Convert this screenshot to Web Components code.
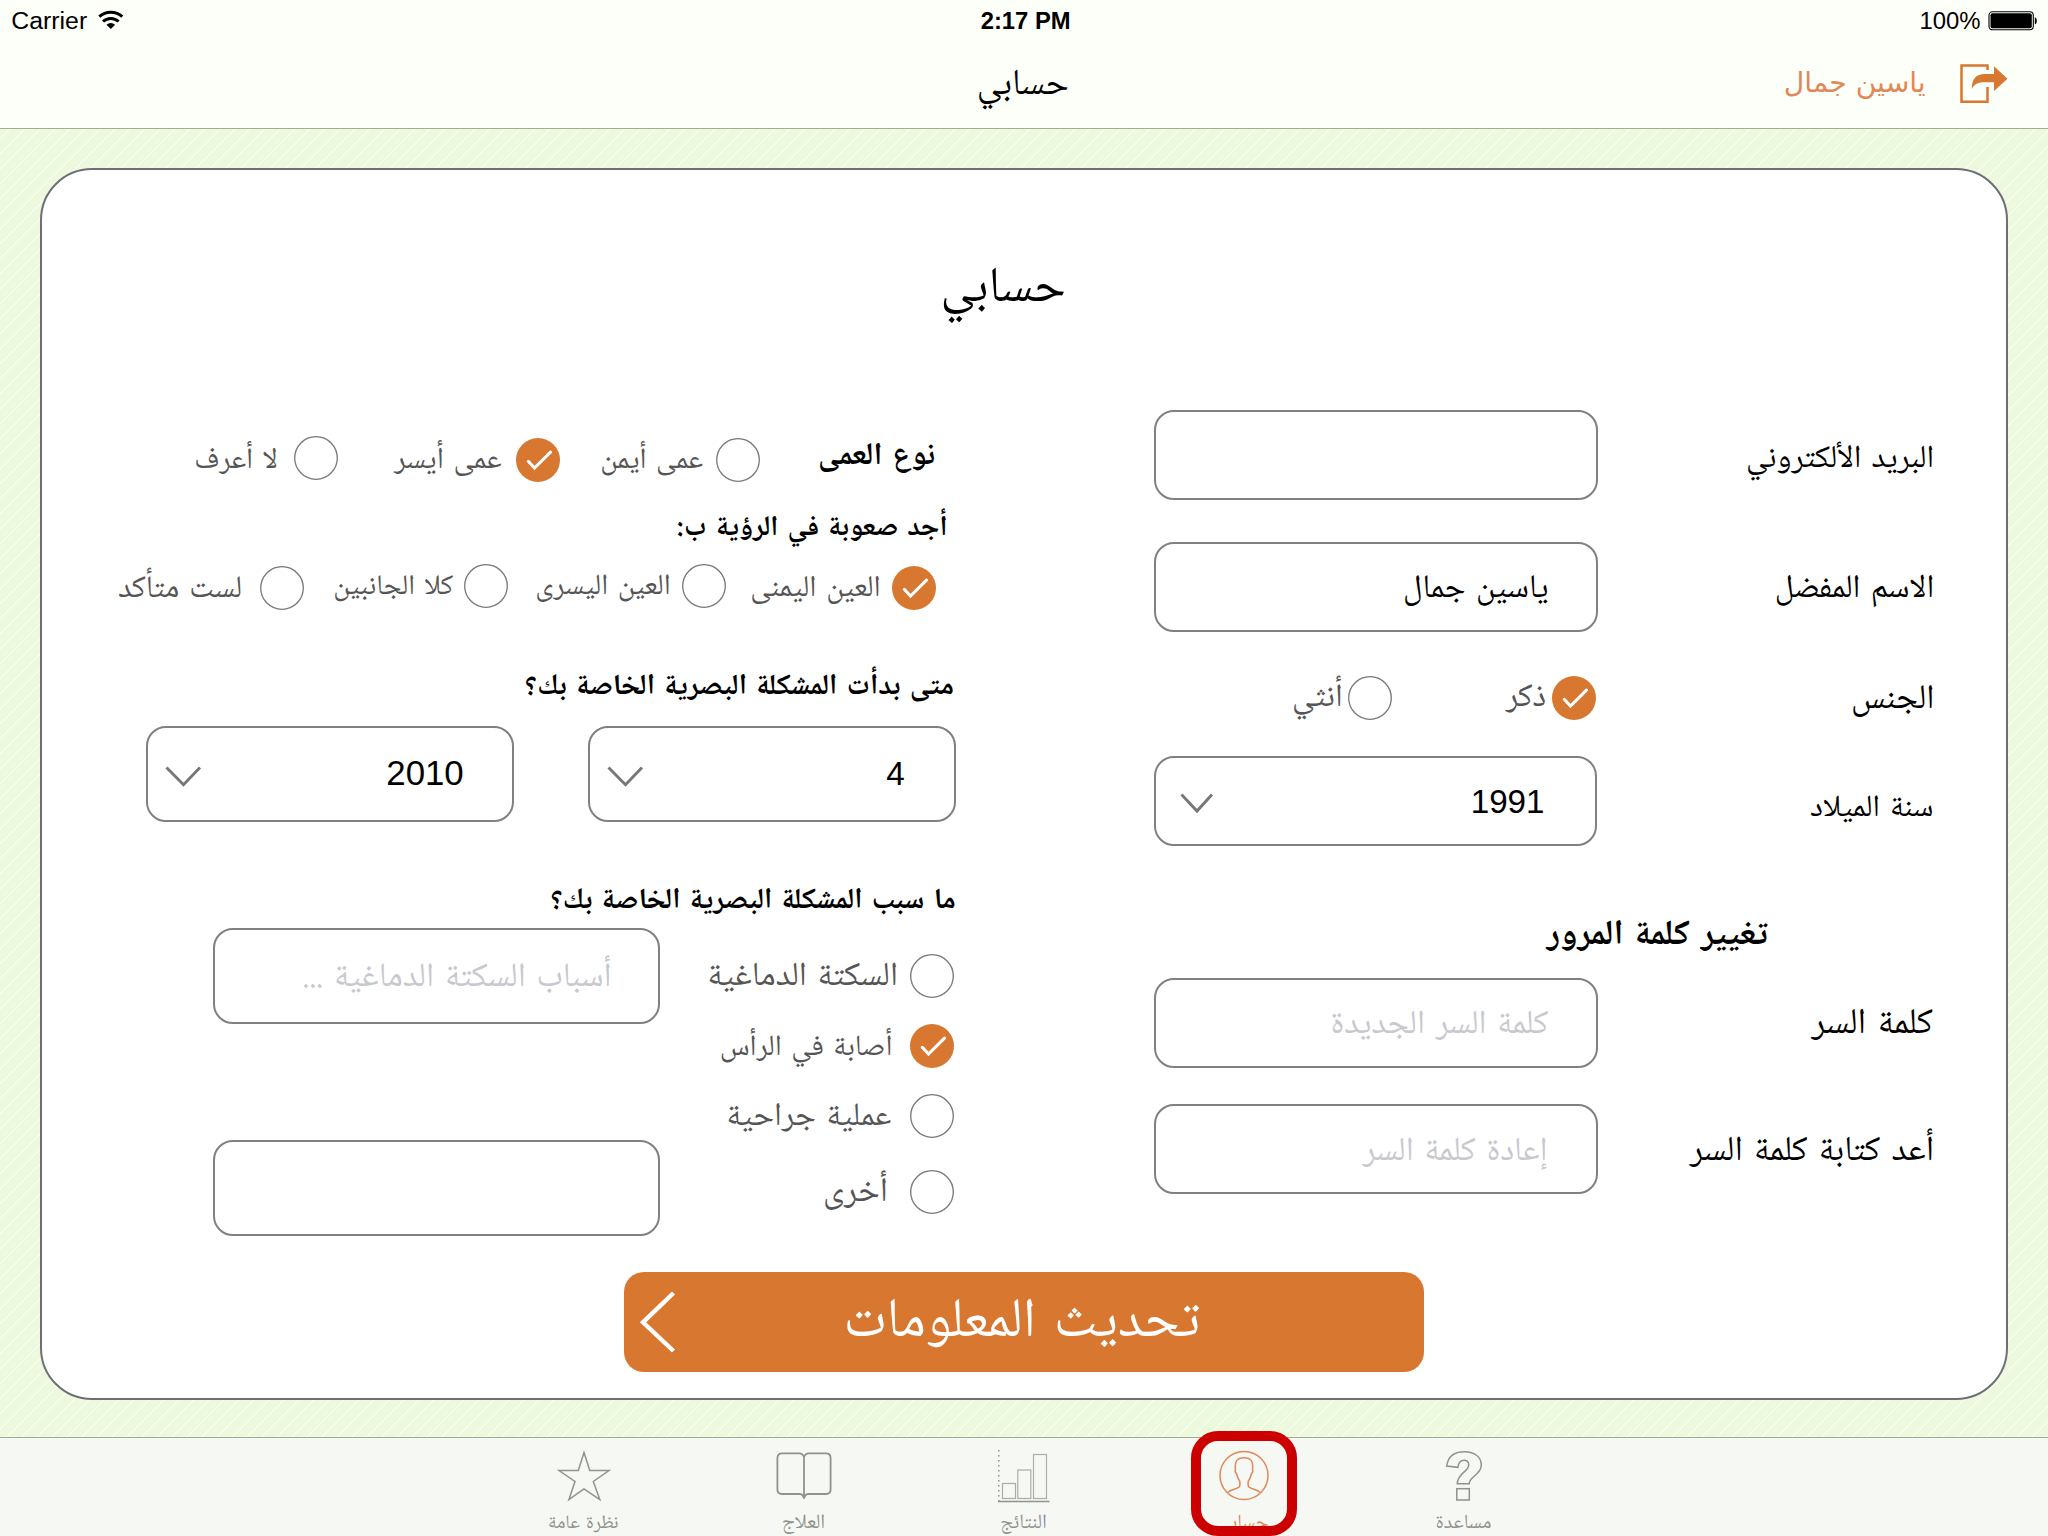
<!DOCTYPE html>
<html lang="ar">
<head>
<meta charset="utf-8">
<title>حسابي</title>
<style>
html,body{margin:0;width:2048px;height:1536px;overflow:hidden}
body{font-family:"Noto Naskh Arabic","DejaVu Sans",sans-serif;color:#000}
</style>
</head>
<body>
<account-app></account-app>
<script>
const FACES={
  naskh:'"Noto Naskh Arabic","DejaVu Sans",sans-serif',
  sans:'"DejaVu Sans",sans-serif',
  latin:'"Liberation Sans",Arial,sans-serif'
};
const ctx=document.createElement('canvas').getContext('2d');

/* A single line of text whose ink spans exactly `w` pixels, baseline 34px below its top. */
class FitText extends HTMLElement{
  connectedCallback(){
    const w=+this.getAttribute('w'),name=this.getAttribute('face')||'naskh',face=FACES[name];
    const dir=name=='latin'?'ltr':'rtl',gap=name=='naskh'?.1:0;
    const bold=this.hasAttribute('bold')?700:400;
    const r=this.attachShadow({mode:'open'});
    r.innerHTML=`<style>:host{display:block;flex:none;direction:ltr;width:${w}px;height:${this.getAttribute('h')||48}px;font-family:${face};font-weight:${bold}}
      span{display:block;width:max-content;white-space:pre;line-height:1.2;word-spacing:${gap}em;direction:${dir};transform-origin:0 0}
      i{display:inline-block;width:0;height:0}</style><span><slot></slot><i></i></span>`;
    ctx.font=`${bold} 100px ${face}`;ctx.direction=dir;ctx.textAlign='left';ctx.wordSpacing=gap*100+'px';
    const m=ctx.measureText(this.textContent);
    const size=100*w/(m.actualBoundingBoxRight+m.actualBoundingBoxLeft);
    const s=r.querySelector('span');
    s.style.fontSize=size+'px';
    const base=r.querySelector('i').getBoundingClientRect().bottom-this.getBoundingClientRect().top;
    s.style.transform=`translate(${m.actualBoundingBoxLeft*size/100}px,${34-base}px)`;
  }
}

class RadioDot extends HTMLElement{
  connectedCallback(){
    const on=this.hasAttribute('checked');
    this.attachShadow({mode:'open'}).innerHTML=`<style>:host{display:block;flex:none;width:44px;height:44px}svg{display:block}</style>
    <svg width="44" height="44">${on
      ?'<circle cx="22" cy="22" r="22" fill="#d87730"/><path d="M12.3 23.3 18.5 30 34.5 14.2" fill="none" stroke="#fff" stroke-width="3.1" stroke-linecap="round"/>'
      :'<circle cx="22" cy="22" r="21.3" fill="#fff" stroke="#777" stroke-width="1.3"/>'}</svg>`;
  }
}

class FieldBox extends HTMLElement{
  connectedCallback(){
    const w=this.getAttribute('w'),h=this.getAttribute('h'),c=this.getAttribute('chevron');
    this.attachShadow({mode:'open'}).innerHTML=`<style>:host{display:flex;flex:none;box-sizing:border-box;width:${w}px;height:${h}px;
      border:2px solid #808080;border-radius:20px;align-items:flex-start;justify-content:space-between}
      svg{display:block;margin:${h==90?35:38}px 0 0 ${c}px}</style>
      ${c?`<svg width="37" height="22"><path d="${h==90?'M1.5 1.5 17 18 32 1.5':'M1.5 1.5 18.5 18.7 35 1.5'}" fill="none" stroke="#777" stroke-width="2.9"/></svg>`:'<b></b>'}<slot></slot>`;
  }
}

const ICONS={
  star:'<path d="M30 4.5 35.8 22.5H55L39.3 33.5 45.8 51.5 30 41 14.9 51.5 21 33.5 5 22.5H24.3Z"/>',
  book:'<g stroke-width="1.8"><path d="M30 9C29 6 27.500 5.300 25 5.300H8Q3.400 5.300 3.400 10V41.500Q3.400 46 8 46H26Q29 46.300 30 50.500Q31 46.300 34 46H52Q56.600 46 56.600 41.500V10Q56.600 5.300 52 5.300H35C32.500 5.300 31 6 30 9V50"/></g>',
  chart:'<g transform="translate(-1 0)"><path d="M5.800 2V53" stroke-dasharray="1.400 3.600"/><path d="M5 53.500H56.500"/><g stroke="#aaada9" stroke-width="1.200"><rect x="9.500" y="35.500" width="13" height="15"/><rect x="24.800" y="22" width="13" height="28.500"/><rect x="40.500" y="6.500" width="13" height="44"/></g></g>',
  person:'<circle cx="30" cy="27.500" r="24"/><path d="M14 44.200C17 41.500 23.500 41 25.500 38.700C26.500 37 26 34.500 25.700 33C23.500 30.500 23 27.500 22.500 25.500C21 24.500 20.800 22.500 21.500 21.500C20.500 14 22.500 9.800 30 9.800S39.500 14 38.500 21.500C39.200 22.500 39 24.500 37.500 25.500C37 27.500 36.500 30.500 34.300 33C34 34.500 33.500 37 34.500 38.700C36.500 41 43 41.500 46 44.200"/>',
  help:'<path d="M12.700 18C14 8 21 3.700 30.500 3.700C41 3.700 47.300 9.300 47.300 17C47.300 27 35.400 28 35.200 35.800H23.300C23.300 25 34.700 24 34.700 17C34.700 14 33 12.200 30 12.200C26.500 12.200 24.500 14.500 24 19.300Z"/><rect x="22.800" y="40.700" width="12.500" height="11.300"/>'
};
class TabItem extends HTMLElement{
  connectedCallback(){
    const on=this.hasAttribute('active');
    this.attachShadow({mode:'open'}).innerHTML=`<style>:host{display:flex;flex-direction:column;align-items:center;box-sizing:border-box;width:220px;height:98px;padding-top:10px;
      position:relative;color:${on?'#e08858':'#8f928e'}}
      svg{display:block;flex:none}.label{margin-top:-10px}
      .mark{position:absolute;left:57.500px;top:-7.500px;width:106px;height:105.500px;box-sizing:border-box;border:10px solid #c00;border-radius:27px}</style>
      <svg width="60" height="56" fill="none" stroke="currentColor" stroke-width="1.5">${ICONS[this.getAttribute('icon')]}</svg>
      <div class="label"><slot></slot></div>${on?'<div class="mark"></div>':''}`;
  }
}

class AppHeader extends HTMLElement{
  connectedCallback(){
    this.attachShadow({mode:'open'}).innerHTML=`<style>:host{display:block;box-sizing:border-box;height:129px;background:#fdfff9;border-bottom:1px solid #a3ab9a}
      div{display:flex;align-items:flex-start;height:40px}svg{display:block;flex:none}.n{color:#e08858}</style>
      <div><fit-text w="74.3" face="latin" style="margin:-5px 0 0 12.6px">Carrier</fit-text>
      <svg width="26" height="20" style="margin:10px 0 0 11px"><g fill="none" stroke="#000" stroke-width="3"><path d="M1.300 6.700A16.800 16.800 0 0 1 24.300 6.700"/><path d="M5 11.500A11.300 11.300 0 0 1 20.600 11.500"/></g><path d="M12.800 19 8.500 14.800A6.200 6.200 0 0 1 17.100 14.800Z"/></svg>
      <fit-text w="87.7" face="latin" bold style="margin:-5px 0 0 857.500px">2:17 PM</fit-text>
      <fit-text w="58.8" face="latin" style="margin:-5px 0 0 852px">100%</fit-text>
      <svg width="50" height="20" style="margin:10.500px 0 0 8px"><rect x="1" y=".8" width="44.300" height="18" rx="3.500" fill="none" stroke="#000" stroke-width="1.100"/><rect x="2.500" y="2.300" width="41.300" height="15" rx="2" /><path d="M46.800 6.200C49.500 6.500 49.500 13 46.800 13.300Z"/></svg></div>
      <div><fit-text w="89" style="margin:20px 0 0 979px">حسابي</fit-text>
      <fit-text class="n" w="139.5" face="sans" style="margin:17.500px 0 0 717.500px">ياسين جمال</fit-text>
      <svg width="56" height="46" style="margin:20px 0 0 31px"><path d="M31.500 10V5.500H5.500V41.700H31.500V27" fill="none" stroke="#d87730" stroke-width="2.500"/><path fill="#d87730" d="M51.500 18.700 38 6.300V14H29C20 14 16 19 15.700 29C19 23.500 22 22.300 29 22.300H38V31Z"/></svg></div>`;
  }
}

class SaveButton extends HTMLElement{
  connectedCallback(){
    this.attachShadow({mode:'open'}).innerHTML=`<style>:host{display:flex;flex:none;width:800px;height:100px;border-radius:20px;background:#d87730;color:#fff;align-items:flex-start}</style>
    <svg width="40" height="64" style="display:block;flex:none;margin:18px 0 0 14px"><path d="M35.500 3 5 32.300 35.500 61" fill="none" stroke="#fff" stroke-width="4.400"/></svg><slot></slot>`;
  }
}

class AccountPanel extends HTMLElement{
  connectedCallback(){
    this.attachShadow({mode:'open'}).innerHTML=`<style>
      :host{display:flex;flex-direction:column;align-items:flex-start;box-sizing:border-box;width:1968px;height:1232px;margin:39px 0 0 40px;background:#fff;border:2px solid #6d6e78;border-radius:52px}
      .cols{display:flex;height:840px;margin-top:85px}
      .l{width:1088px}.r{width:870px}
      .row{display:flex;align-items:flex-start}
      .g{color:#555}.p{color:#c8c8cf}
      .opts{display:flex;flex-direction:column;width:294px;padding-top:26px;gap:26px}
      .opts .row{direction:rtl;height:44px}
      .boxes{display:flex;flex-direction:column;gap:116px;margin-left:171px}
    </style>
    <fit-text w="121" style="margin:97px 0 0 901.500px">حسابي</fit-text>
    <div class="cols">
      <div class="l">
        <div class="row" style="margin-top:30px;height:60px">
          <fit-text class="g" w="80.5" style="margin:4px 0 0 154px">لا أعرف</fit-text><radio-dot style="margin:6px 0 0 17.500px"></radio-dot>
          <fit-text class="g" w="107.3" style="margin:3.500px 0 0 55.700px">عمى أيسر</fit-text><radio-dot checked style="margin:8px 0 0 15px"></radio-dot>
          <fit-text class="g" w="100.5" style="margin:3.500px 0 0 42px">عمى أيمن</fit-text><radio-dot style="margin:8px 0 0 13.500px"></radio-dot>
          <fit-text bold w="114" style="margin:0 0 0 60px">نوع العمى</fit-text>
        </div>
        <div class="row" style="margin-top:11px;height:48px"><fit-text bold w="268.3" style="margin-left:635.700px">أجد صعوبة في الرؤية ب:</fit-text></div>
        <div class="row" style="margin-top:11px;height:54px">
          <fit-text class="g" w="121.5" style="margin:2.500px 0 0 77px">لست متأكد</fit-text><radio-dot style="margin:6px 0 0 19.500px"></radio-dot>
          <fit-text class="g" w="118" style="margin:0 0 0 31px">كلا الجانبين</fit-text><radio-dot style="margin:4px 0 0 11px"></radio-dot>
          <fit-text class="g" w="132" style="margin:0 0 0 29px">العين اليسرى</fit-text><radio-dot style="margin:4px 0 0 13px"></radio-dot>
          <fit-text class="g" w="127" style="margin:1.500px 0 0 26px">العين اليمنى</fit-text><radio-dot checked style="margin:6px 0 0 13px"></radio-dot>
        </div>
        <div class="row" style="margin-top:45.500px;height:48px"><fit-text bold w="427" style="margin-left:484px">متى بدأت المشكلة البصرية الخاصة بك؟</fit-text></div>
        <div class="row" style="margin-top:18.500px">
          <field-box w="368" h="96" chevron="17" style="margin-left:104px"><fit-text face="latin" w="74.5" style="margin:23px 49.500px 0 0">2010</fit-text></field-box>
          <field-box w="368" h="96" chevron="17" style="margin-left:74px"><fit-text face="latin" w="17" style="margin:23px 50px 0 0">4</fit-text></field-box>
        </div>
        <div class="row" style="margin-top:51.500px;height:48px"><fit-text bold w="403" style="margin-left:509.700px">ما سبب المشكلة البصرية الخاصة بك؟</fit-text></div>
        <div class="row" style="margin-top:6.500px">
          <div class="boxes">
            <field-box w="447" h="96"><fit-text class="p" w="306.5" style="margin:22px 48px 0 0">أسباب السكتة الدماغية ...</fit-text></field-box>
            <field-box w="447" h="96"></field-box>
          </div>
          <div class="opts">
            <div class="row"><radio-dot></radio-dot><fit-text class="g" w="186.5" style="margin:-3.500px 14px 0 0">السكتة الدماغية</fit-text></div>
            <div class="row"><radio-dot checked></radio-dot><fit-text class="g" w="169.5" style="margin:-3.300px 19px 0 0">أصابة في الرأس</fit-text></div>
            <div class="row"><radio-dot></radio-dot><fit-text class="g" w="162" style="margin:-3px 19.500px 0 0">عملية جراحية</fit-text></div>
            <div class="row" style="margin-top:6px"><radio-dot></radio-dot><fit-text class="g" w="61" style="margin:-3px 24px 0 0">أخرى</fit-text></div>
          </div>
        </div>
      </div>
      <div class="r">
        <div class="row" style="margin-top:10px"><field-box w="444" h="90" style="margin-left:24px"></field-box><fit-text w="184.6" style="margin:22.800px 0 0 149.800px">البريد الألكتروني</fit-text></div>
        <div class="row" style="margin-top:42px"><field-box w="444" h="90" style="margin-left:24px"><fit-text w="142.5" style="margin:19px 48.500px 0 0">ياسين جمال</fit-text></field-box><fit-text w="155.6" style="margin:21.400px 0 0 178.800px">الاسم المفضل</fit-text></div>
        <div class="row" style="margin-top:44px;height:44px">
          <fit-text class="g" w="47" style="margin:-4px 0 0 164px">أنثي</fit-text><radio-dot style="margin-left:7px"></radio-dot>
          <fit-text class="g" w="40" style="margin:-4px 0 0 113px">ذكر</fit-text><radio-dot checked style="margin-left:7px"></radio-dot>
          <fit-text w="79.4" style="margin:-2px 0 0 257px">الجنس</fit-text>
        </div>
        <div class="row" style="margin-top:36px"><field-box w="443" h="90" chevron="24" style="margin-left:24px"><fit-text face="latin" w="70" style="margin:21px 52px 0 0">1991</fit-text></field-box><fit-text w="121" style="margin:26.300px 0 0 214px">سنة الميلاد</fit-text></div>
        <div class="row" style="margin-top:64px;height:48px"><fit-text bold w="222.6" style="margin-left:415.400px">تغيير كلمة المرور</fit-text></div>
        <div class="row" style="margin-top:20px"><field-box w="444" h="90" style="margin-left:24px"><fit-text class="p" w="216" style="margin:19px 48px 0 0">كلمة السر الجديدة</fit-text></field-box><fit-text w="121.7" style="margin:20.700px 0 0 212.700px">كلمة السر</fit-text></div>
        <div class="row" style="margin-top:36px"><field-box w="444" h="90" style="margin-left:24px"><fit-text class="p" w="184.5" style="margin:20px 49.500px 0 0">إعادة كلمة السر</fit-text></field-box><fit-text w="243.4" style="margin:21.700px 0 0 91px">أعد كتابة كلمة السر</fit-text></div>
      </div>
    </div>
    <save-button style="margin:32px 0 0 582px"><fit-text w="352" style="margin:30px 0 0 169.500px">تحديث المعلومات</fit-text></save-button>`;
  }
}

class AccountApp extends HTMLElement{
  connectedCallback(){
    this.attachShadow({mode:'open'}).innerHTML=`<style>:host{display:flex;flex-direction:column;width:2048px;height:1536px;overflow:hidden;
      background:linear-gradient(135deg,#edf9dc 10.500%,#fff 13.300%,#edf9dc 16.100%,#edf9dc 60.500%,#fff 63.300%,#edf9dc 66.100%) 0 0/15px 15px}
      nav{display:flex;box-sizing:border-box;height:99px;margin-top:37px;padding-left:473.500px;border-top:1px solid #9fab97;background:#f6f8f4}</style>
      <app-header></app-header><account-panel></account-panel>
      <nav>
        <tab-item icon="star"><fit-text h="40" w="68.5">نظرة عامة</fit-text></tab-item>
        <tab-item icon="book"><fit-text h="40" w="41">العلاج</fit-text></tab-item>
        <tab-item icon="chart"><fit-text h="40" w="44.5">النتائج</fit-text></tab-item>
        <tab-item icon="person" active><fit-text h="40" w="49">حسابي</fit-text></tab-item>
        <tab-item icon="help"><fit-text h="40" w="54">مساعدة</fit-text></tab-item>
      </nav>`;
  }
}
customElements.define('fit-text',FitText);
customElements.define('radio-dot',RadioDot);
customElements.define('field-box',FieldBox);
customElements.define('tab-item',TabItem);
customElements.define('app-header',AppHeader);
customElements.define('save-button',SaveButton);
customElements.define('account-panel',AccountPanel);
customElements.define('account-app',AccountApp);
</script>
</body>
</html>
